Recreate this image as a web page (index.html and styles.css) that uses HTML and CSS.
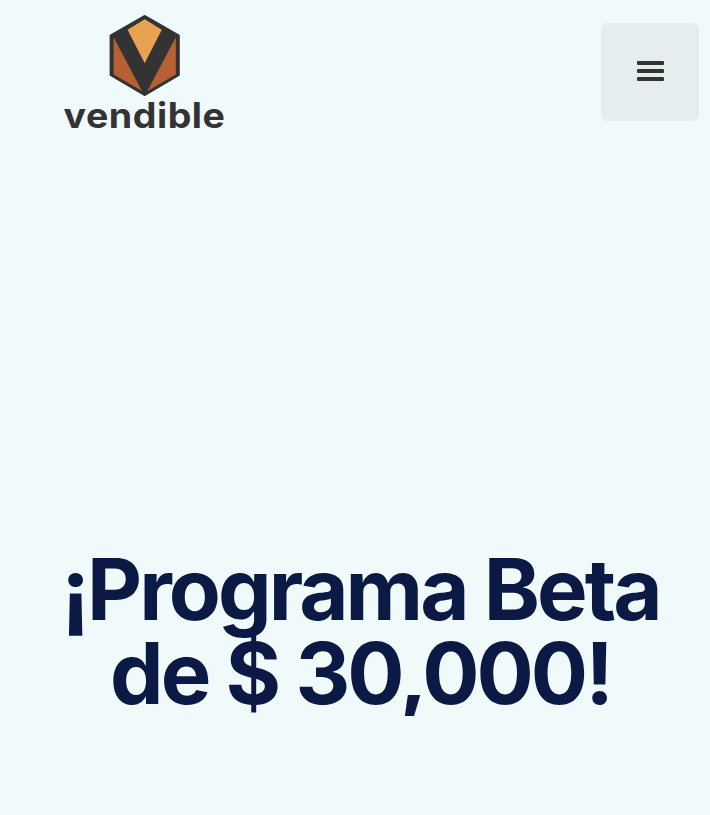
FILE: index.html
```html
<!DOCTYPE html>
<html lang="es">
<head>
  <meta charset="UTF-8">
  <meta name="viewport" content="width=device-width, initial-scale=1.0">
  <title>Vendible</title>
  <link rel="stylesheet" href="styles.css">
</head>
<body>
  <header class="navbar">
    <a class="logo" href="#" aria-label="vendible">
      <svg width="164" height="120" viewBox="0 0 164 120">
        <path d="M82.7 6.5 116.3 25.8v39L82.7 84.5 49.1 64.8V25.8Z" fill="#333" stroke="#333" stroke-width="3" stroke-linejoin="round"/>
        <path d="M82.7 9.3 99.8 19.7 82.7 53.3 65.6 19.7Z" fill="#e8a252"/>
        <path d="M51.6 27.2 80 81 51.6 64.5Z" fill="#b66034"/>
        <path d="M113.8 27.2 85.4 81 113.8 64.5Z" fill="#b66034"/>
        <text class="wordmark" x="1.5" y="118" textLength="162" lengthAdjust="spacingAndGlyphs">vendible</text>
      </svg>
    </a>
    <button class="menu-button" aria-label="Menú">
      <span class="bar"></span>
      <span class="bar"></span>
      <span class="bar"></span>
    </button>
  </header>

  <main class="hero">
    <h1>¡Programa Beta<br>de $ 30,000!</h1>
  </main>
</body>
</html>
```

FILE: styles.css
```css
body {
  margin: 0;
  background-color: #f0fafb;
  font-family: Inter, sans-serif;
  color: #333;
}
.navbar {
  display: flex;
  justify-content: space-between;
  align-items: flex-start;
  padding: 10px 11px 0 62px;
}
.logo svg {
  display: block;
  overflow: visible;
}
.wordmark {
  font-family: Inter, sans-serif;
  font-size: 35px;
  font-weight: 700;
  letter-spacing: 0.5px;
  fill: #333;
}
.menu-button {
  display: flex;
  flex-direction: column;
  justify-content: center;
  align-items: center;
  gap: 4px;
  width: 98px;
  height: 98px;
  margin-top: 13px;
  padding: 0 0 2px 1px;
  border: none;
  border-radius: 6px;
  background-color: #e5edef;
  cursor: pointer;
}
.bar {
  width: 27px;
  height: 4px;
  border-radius: 1px;
  background-color: #333;
}
.hero {
  padding-top: 418px;
  text-align: center;
}
h1 {
  margin: 0;
  padding-left: 11px;
  font-size: 85px;
  font-weight: 700;
  line-height: 84px;
  letter-spacing: -2.95px;
  color: #0a1a44;
}
```
